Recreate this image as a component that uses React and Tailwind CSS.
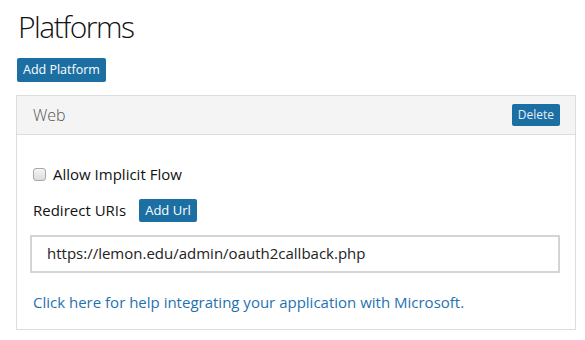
export default function App() {
  return (
    <div className="w-[585px] h-[340px] bg-white text-[#222] pl-4 pr-[9px] pt-[9px]" style={{ fontFamily: '"Open Sans", sans-serif' }}>
      <h1 className="ml-[2px] text-[30px] font-light leading-[36px] tracking-[-1.5px] text-[#111]">Platforms</h1>
      <button className="mt-[13px] ml-[1px] h-[24px] px-[6px] bg-[#1b6fa3] text-white text-[12.5px] leading-[24px] rounded-[2px]">
        Add Platform
      </button>
      <div className="mt-[13px] border border-[#dddddd] h-[235px]">
        <div className="h-[39px] bg-[#f4f4f4] border-b border-[#dddddd] flex items-center justify-between pl-4 pr-[15px]">
          <span className="text-[16px] font-light text-[#555]">Web</span>
          <button className="h-[22px] px-[6px] bg-[#1b6fa3] text-[#e8eef4] text-[12px] leading-[22px] rounded-[2px]">Delete</button>
        </div>
        <div className="pl-4 pr-[15px] pt-[28px]">
          <label className="flex items-center gap-[7px] text-[15px] text-[#111]">
            <input type="checkbox" className="appearance-none w-[13px] h-[13px] m-0 border border-[#a9a9a9] rounded-[3px] bg-gradient-to-b from-[#f5f5f5] to-[#dcdcdc]" />
            Allow Implicit Flow
          </label>
          <div className="mt-[13px] flex items-center gap-[13px] text-[15px] text-[#111]">
            <span>Redirect URIs</span>
            <button className="h-[23px] px-[6px] bg-[#1b6fa3] text-white text-[13px] leading-[23px] rounded-[2px]">Add Url</button>
          </div>
          <div className="mt-[13px] -ml-[3px] h-[38px] border-2 border-[#d4d4d4] flex items-center pl-[15px] text-[15px] text-[#222]">
            https://lemon.edu/admin/oauth2callback.php
          </div>
          <a className="block mt-[18px] text-[15px] text-[#1f72b0]">Click here for help integrating your application with Microsoft.</a>
        </div>
      </div>
    </div>
  );
}
